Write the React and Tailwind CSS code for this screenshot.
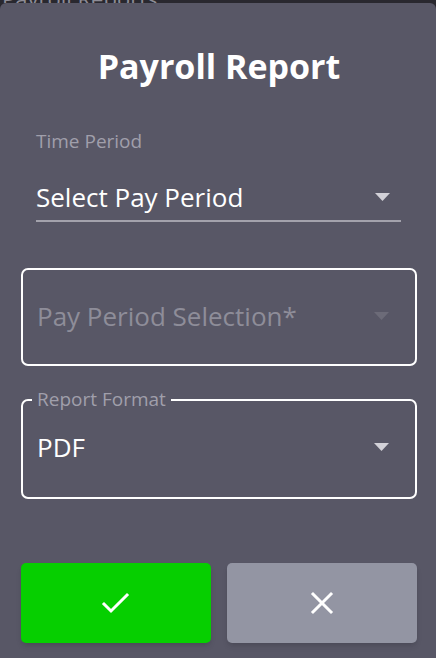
import React from "react";

function Caret({ className }) {
  return (
    <svg width="15" height="8" viewBox="0 0 15 8" className={className}>
      <path d="M0 0 H15 L7.5 8 Z" fill="currentColor" />
    </svg>
  );
}

export default function App() {
  return (
    <div className="w-[436px] h-[658px] bg-[#29282f] flex flex-col overflow-hidden" style={{ fontFamily: "'Open Sans', sans-serif" }}>
      <div className="h-[3px] overflow-hidden flex items-end pl-[2px] shrink-0">
        <span className="text-[22px] leading-[10px] text-[#8d8c96] whitespace-nowrap">Payroll Reports</span>
      </div>
      <div className="flex-1 bg-[#585766] rounded-t-[6px] flex flex-col pl-[21px] pr-[19px]">
        <h1 className="text-center text-white font-bold text-[34px] leading-[34px] mt-[46px]">Payroll Report</h1>

        <div className="mt-[49px] pl-[15px] pr-[16px]">
          <div className="text-[19px] leading-[19px] text-[#a09fab]">Time Period</div>
          <div className="mt-[29px] flex items-center justify-between border-b-2 border-[#a3a2ac] pb-[6px] pr-[11px]">
            <span className="text-[26px] leading-[34px] text-white">Select Pay Period</span>
            <Caret className="text-[#d2d1d8]" />
          </div>
        </div>

        <div className="mt-[46px] h-[98px] border-2 border-white rounded-[7px] flex items-center justify-between pl-[14px] pr-[26px] pb-[2px]">
          <span className="text-[26px] leading-[34px] text-[#8e8d99]">Pay Period Selection*</span>
          <Caret className="text-[#6c6b78]" />
        </div>

        <fieldset className="mt-[24px] border-2 border-white rounded-[7px] pl-[9px] pr-[26px]">
          <legend className="px-[5px] text-[19px] leading-[19px] text-[#a09fab]">Report Format</legend>
          <div className="h-[88px] pb-[12px] pl-[5px] flex items-center justify-between">
            <span className="text-[26px] leading-[34px] text-white">PDF</span>
            <Caret className="text-[#d2d1d8]" />
          </div>
        </fieldset>

        <div className="mt-[64px] grid grid-cols-2 gap-[16px]">
          <button className="h-[80px] rounded-[5px] bg-[#06cf00] flex items-center justify-center shadow-md">
            <svg width="30" height="24" viewBox="0 0 30 24" fill="none" stroke="white" strokeWidth="3" strokeLinecap="square">
              <path d="M3 13 L10 20 L26 4" />
            </svg>
          </button>
          <button className="h-[80px] rounded-[5px] bg-[#9395a3] flex items-center justify-center shadow-md">
            <svg width="24" height="24" viewBox="0 0 24 24" fill="none" stroke="white" strokeWidth="3" strokeLinecap="square">
              <path d="M3 3 L21 21 M21 3 L3 21" />
            </svg>
          </button>
        </div>
      </div>
    </div>
  );
}
